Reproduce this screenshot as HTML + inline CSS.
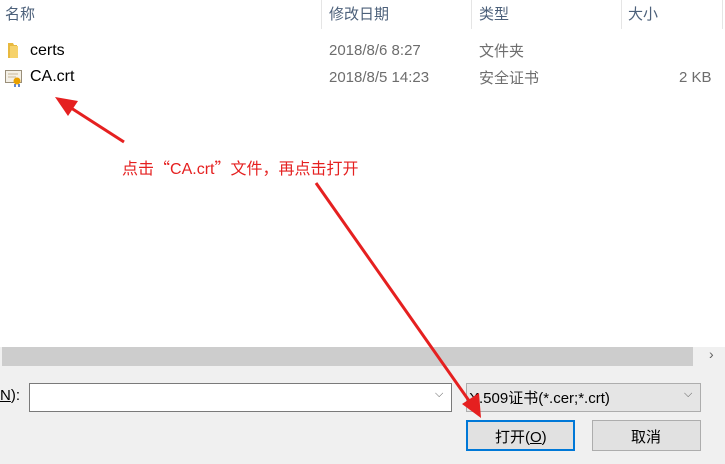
<!DOCTYPE html>
<html><head><meta charset="utf-8"><style>
body{margin:0;width:725px;height:464px;overflow:hidden;background:#f0f0f0;position:relative;font-family:"Liberation Sans","Noto Sans CJK SC",sans-serif;font-size:15px;color:#000}
.a{position:absolute;white-space:nowrap}
.hd{color:#4c607a;font-size:15px}
.g{color:#6d6d6d}
</style></head><body>
<div class="a" style="left:0;top:0;width:725px;height:347px;background:#fff"></div>
<div class="a" style="left:156px;top:-6px;font-size:10px;color:#666">^</div>
<div class="a hd" style="left:5px;top:3px">名称</div>
<div class="a" style="left:321px;top:0;width:1px;height:29px;background:#e5e5e5"></div>
<div class="a hd" style="left:329px;top:3px">修改日期</div>
<div class="a" style="left:471px;top:0;width:1px;height:29px;background:#e5e5e5"></div>
<div class="a hd" style="left:479px;top:3px">类型</div>
<div class="a" style="left:621px;top:0;width:1px;height:29px;background:#e5e5e5"></div>
<div class="a hd" style="left:628px;top:3px">大小</div>
<div class="a" style="left:722px;top:0;width:1px;height:29px;background:#e5e5e5"></div>

<svg class="a" style="left:6px;top:42px" width="16" height="17"><path d="M2 1h5l1 2h3v13H2z" fill="#e8b93f"/><path d="M4 4h8v12H4z" fill="#f6d26b"/></svg>
<div class="a" style="left:30px;top:42px;font-size:16px">certs</div>
<div class="a g" style="left:329px;top:42px">2018/8/6 8:27</div>
<div class="a g" style="left:479px;top:40px">文件夹</div>

<svg class="a" style="left:4px;top:68px" width="20" height="20"><rect x="1.5" y="2.5" width="16" height="12" fill="#f4f0e6" stroke="#9a8f7a"/><path d="M4 6h10M4 9h8" stroke="#c8b99a"/><circle cx="13" cy="13" r="3.5" fill="#e8a000"/><path d="M11 16v3M15 16v3" stroke="#3060c0" stroke-width="1.5"/></svg>
<div class="a" style="left:30px;top:68px;font-size:16px">CA.crt</div>
<div class="a g" style="left:329px;top:69px">2018/8/5 14:23</div>
<div class="a g" style="left:479px;top:67px">安全证书</div>
<div class="a g" style="left:679px;top:69px">2 KB</div>

<div class="a" style="left:122px;top:155px;color:#e52020;font-size:16px;font-family:'Noto Sans CJK SC',sans-serif">点击“<span style="font-family:'Liberation Sans'">CA.crt</span>”文件，再点击打开</div>

<div class="a" style="left:2px;top:347px;width:691px;height:19px;background:#cdcdcd"></div>
<div class="a" style="left:693px;top:347px;width:32px;height:19px;background:#f0f0f0"></div>
<div class="a" style="left:709px;top:346px;font-size:14px;color:#606060">›</div>

<div class="a" style="left:0;top:387px"><u>N</u>):</div>
<div class="a" style="left:29px;top:383px;width:421px;height:27px;background:#fff;border:1px solid #7a7a7a"></div>
<div class="a" style="left:435px;top:388px;font-size:11px;color:#555">⌵</div>
<div class="a" style="left:466px;top:383px;width:233px;height:27px;background:#e5e5e5;border:1px solid #adadad"></div>
<div class="a" style="left:469px;top:387px">X.509证书(*.cer;*.crt)</div>
<div class="a" style="left:684px;top:388px;font-size:11px;color:#555">⌵</div>

<div class="a" style="left:466px;top:420px;width:105px;height:27px;background:#e1e1e1;border:2px solid #0078d7"></div>
<div class="a" style="left:495px;top:426px">打开(<u>O</u>)</div>
<div class="a" style="left:592px;top:420px;width:107px;height:29px;background:#e1e1e1;border:1px solid #adadad"></div>
<div class="a" style="left:631px;top:426px">取消</div>

<svg class="a" style="left:0;top:0" width="725" height="464">
<line x1="124" y1="142" x2="68" y2="106" stroke="#e52020" stroke-width="3"/>
<polygon points="55,97 78,101 68,116" fill="#e52020"/>
<line x1="316" y1="183" x2="472" y2="405" stroke="#e52020" stroke-width="3"/>
<polygon points="481,418 462,404 479,393" fill="#e52020"/>
</svg>
</body></html>
